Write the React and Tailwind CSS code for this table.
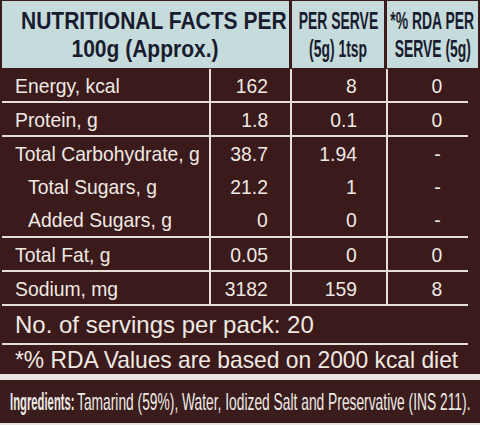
export default function App() {
  const sans = { fontFamily: '"Liberation Sans", Arial, sans-serif' };
  const line = "border-[#e6dfd8]";
  const c1 = "w-[207px] shrink-0 pl-[13px] flex items-center";
  const c2 = `w-[81px] shrink-0 border-l-2 ${line} flex items-center justify-end pr-[22px]`;
  const c3 = `w-[96px] shrink-0 border-l-2 ${line} flex items-center justify-end pr-[29px]`;
  const c4 = `w-[82px] shrink-0 border-l-2 ${line} flex items-center justify-center pl-[18px]`;
  const L = ({ children }) => (
    <span className="inline-block whitespace-nowrap origin-left scale-x-[0.92]">{children}</span>
  );
  const R = ({ children }) => (
    <span className="inline-block whitespace-nowrap origin-right scale-x-[0.92]">{children}</span>
  );
  const C = ({ children }) => (
    <span className="inline-block whitespace-nowrap origin-center scale-x-[0.92]">{children}</span>
  );
  const Row = ({ a, b, c, d, h, indent = false, top = true }) => (
    <div className={"flex " + (top ? `border-t-2 ${line} ` : "") + h}>
      <div className={c1 + (indent ? " pl-[26px]" : "")}><L>{a}</L></div>
      <div className={c2}><R>{b}</R></div>
      <div className={c3}><R>{c}</R></div>
      <div className={c4}><C>{d}</C></div>
    </div>
  );
  return (
    <div className="w-[480px] h-[425px] bg-[#e7e4e2] overflow-hidden" style={sans}>
      <div className="bg-[#3b1a1b] pl-[2px] pt-[1px] h-[374px] text-[#efe9e3] text-[21px] leading-none">
        <div className="flex h-[67px] text-[#191b2e] font-bold text-[24px] leading-[28px]">
          <div className="w-[287px] bg-[#c6dbdc] flex flex-col items-center justify-center">
            <div className="pl-[16px]">
              <span className="inline-block whitespace-nowrap origin-center scale-x-[0.875]">NUTRITIONAL FACTS PER</span>
            </div>
            <div>
              <span className="inline-block whitespace-nowrap origin-center scale-x-[0.875]">100g (Approx.)</span>
            </div>
          </div>
          <div className="w-[3px]"></div>
          <div className="w-[92px] bg-[#c6dbdc] flex flex-col items-center justify-center">
            <span className="inline-block whitespace-nowrap origin-center scale-x-[0.58]">PER SERVE</span>
            <span className="inline-block whitespace-nowrap origin-center scale-x-[0.58]">(5g) 1tsp</span>
          </div>
          <div className="w-[3px]"></div>
          <div className="w-[91px] bg-[#c6dbdc] flex flex-col items-center justify-center">
            <span className="inline-block whitespace-nowrap origin-center scale-x-[0.58]">*% RDA PER</span>
            <span className="inline-block whitespace-nowrap origin-center scale-x-[0.58]">SERVE (5g)</span>
          </div>
        </div>
        <div className="h-[1px]"></div>
        <div className="w-[466px]">
          <Row a="Energy, kcal" b="162" c="8" d="0" h="h-[32px]" top={false} />
          <Row a="Protein, g" b="1.8" c="0.1" d="0" h="h-[34px]" />
          <div className={`flex flex-col border-t-2 ${line}`}>
            <Row a="Total Carbohydrate, g" b="38.7" c="1.94" d="-" h="h-[33px]" top={false} />
            <Row a="Total Sugars, g" b="21.2" c="1" d="-" h="h-[33px]" indent top={false} />
            <Row a="Added Sugars, g" b="0" c="0" d="-" h="h-[33px]" indent top={false} />
          </div>
          <Row a="Total Fat, g" b="0.05" c="0" d="0" h="h-[34px]" />
          <Row a="Sodium, mg" b="3182" c="159" d="8" h="h-[34px]" />
          <div className={`border-t-2 ${line} h-[39px] flex items-center pl-[13px] text-[24px]`}>
            <span className="whitespace-nowrap">No. of servings per pack: 20</span>
          </div>
          <div className={`border-t-2 ${line} h-[31px] flex items-center pl-[13px] text-[24px]`}>
            <span className="inline-block whitespace-nowrap origin-left scale-x-[0.95]">*% RDA Values are based on 2000 kcal diet</span>
          </div>
        </div>
      </div>
      <div className="h-[6px]"></div>
      <div className="bg-[#3a1c1c] h-[43px] flex items-center pl-[10px] text-[#eeeae5] text-[24px] leading-none">
        <div className="w-[67px] shrink-0">
          <span className="inline-block whitespace-nowrap origin-left scale-x-[0.47] font-bold">Ingredients:</span>
        </div>
        <div className="flex-1 min-w-0">
          <span className="inline-block whitespace-nowrap origin-left scale-x-[0.575]">Tamarind (59%), Water, Iodized Salt and Preservative (INS 211).</span>
        </div>
      </div>
    </div>
  );
}
